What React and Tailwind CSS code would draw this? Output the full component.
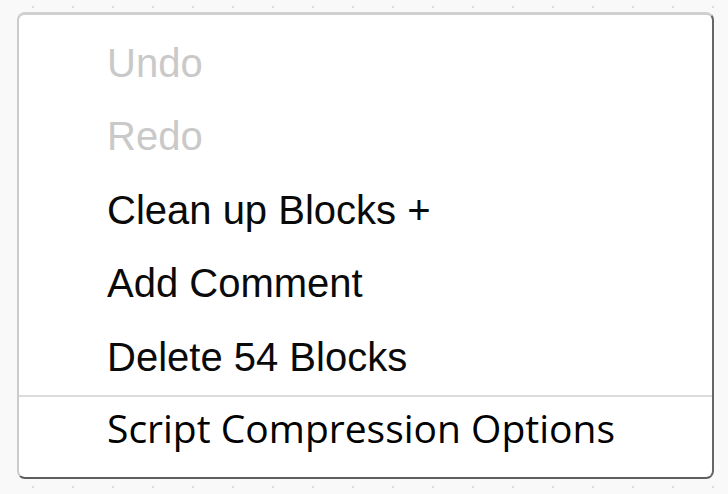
export default function App() {
  const items = [
    { label: "Undo", disabled: true },
    { label: "Redo", disabled: true },
    { label: "Clean up Blocks +" },
    { label: "Add Comment" },
    { label: "Delete 54 Blocks" },
  ];
  return (
    <div className="w-[728px] h-[494px] bg-[#f9f9f9] bg-[radial-gradient(circle,#dcdcdc_1px,transparent_1.5px)] bg-[length:40px_40px] bg-[position:13px_-13px] pt-[12px] pl-[17px]">
      <div className="w-[697px] h-[467px] bg-white rounded-[8px] border-t-[3px] border-l-[2px] border-r-[2px] border-b-[2px] border-t-[#d0d0d0] border-l-[#cccccc] border-r-[#666666] border-b-[#5e5e5e] pt-[11px] flex flex-col">
        {items.map((it) => (
          <div
            key={it.label}
            className={`h-[73.5px] flex items-center pl-[88px] text-[40px] font-['Liberation_Sans',Arial,sans-serif] ${it.disabled ? "text-[#c9c9c9]" : "text-[#0a0a0a]"}`}
          >
            {it.label}
          </div>
        ))}
        <div className="h-[2px] bg-[#dcdcdc] mt-[1px]" />
        <div className="flex-1 flex items-start pt-[2px] pl-[88px] text-[39px] font-['Open_Sans',sans-serif] font-medium text-black">
          Script Compression Options
        </div>
      </div>
    </div>
  );
}
